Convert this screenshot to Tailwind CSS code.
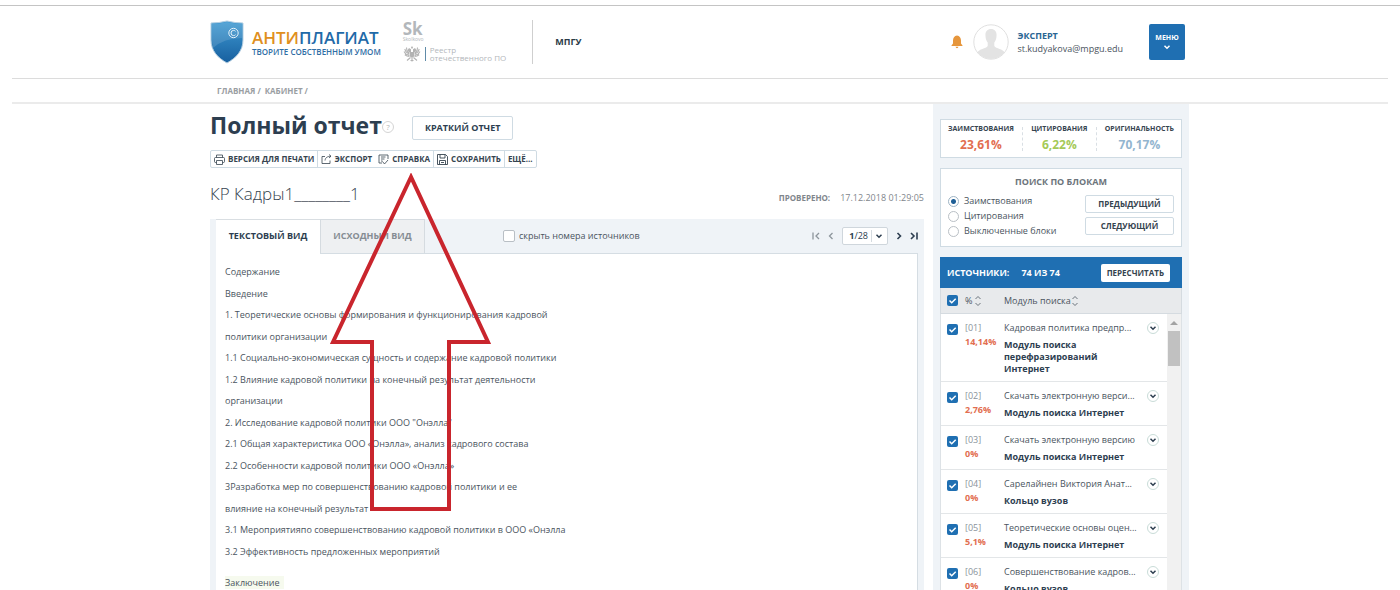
<!DOCTYPE html>
<html lang="ru">
<head>
<meta charset="utf-8">
<title>Антиплагиат — Полный отчет</title>
<script src="https://cdn.jsdelivr.net/npm/@tailwindcss/browser@4"></script>
</head>
<body class="flex h-screen flex-col overflow-hidden bg-white pt-[5px] font-['Open_Sans','Noto_Sans',sans-serif] text-[9px] leading-3 text-[#4a545e]">
<svg class="hidden" aria-hidden="true">
  <symbol id="chev" viewBox="0 0 8 8"><path d="M1.5 2.8 4 5.2 6.500 2.800" fill="none" stroke="currentColor" stroke-width="1.5"/></symbol>
  <symbol id="sort" viewBox="0 0 8 12"><path d="M1.500 4 4 1.500 6.500 4M1.500 8 4 10.500 6.500 8" fill="none" stroke="currentColor" stroke-width=".8"/></symbol>
</svg>

<header class="border-t border-[#c4c4c4]">
  <div class="mx-3 border-b border-[#dcdcdc]">
    <div class="mx-auto flex h-[72px] max-w-[980px] items-center">
      <a href="#" class="flex items-center gap-2">
        <svg class="h-11 w-[34px]" viewBox="0 0 34 44" aria-hidden="true">
          <defs><linearGradient id="sh" x1="0" y1="0" x2="0" y2="1"><stop offset="0" stop-color="#3f9ad2"/><stop offset="1" stop-color="#175f9f"/></linearGradient></defs>
          <path d="M1 3Q9 3 17 1Q25 3 33 3V20C33 31 26 38 17 43C8 38 1 31 1 20Z" fill="url(#sh)" stroke="#b5cfe2"/>
          <path d="M2 4Q10 4 17 2Q25 4 32 4V18Q14 18 3 28Q2 24 2 20Z" fill="#fff" opacity=".13"/>
          <circle cx="23.500" cy="13" r="4.700" fill="none" stroke="#e4f2fb"/>
          <path d="M25.500 11.300Q24.800 10.400 23.600 10.400A2.600 2.600 0 0 0 23.600 15.600Q24.800 15.600 25.500 14.700" fill="none" stroke="#e4f2fb"/>
        </svg>
        <span class="block">
          <span class="block text-[17px] leading-5 font-semibold text-[#1f6aa8]"><span class="text-[#e08f1d]">АНТИ</span>ПЛАГИАТ</span>
          <span class="block text-[8px] leading-2 font-semibold text-[#2f6ea5]">ТВОРИТЕ СОБСТВЕННЫМ УМОМ</span>
        </span>
      </a>
      <div class="ml-[22px] flex flex-col gap-1 text-[#b3b7bb]">
        <div class="flex flex-col">
          <span class="text-[17px] leading-[14px] font-bold">Sk</span>
          <span class="text-[5px] leading-[6px]">Skolkovo</span>
        </div>
        <div class="flex items-center gap-1">
          <svg class="h-4 w-[18px]" viewBox="0 0 18 16" fill="#b3b3b3" aria-hidden="true">
            <path d="M9 0 10 1.500 9.700 2.500H8.300L8 1.500ZM6 2 8 3.300V6H6L5 4.800H4L5 3.500ZM12 2 10 3.300V6H12L13 4.800H14L13 3.500ZM7 6H11V10.500L9 12 7 10.500Z"/>
            <path d="M3.500 1.500 4 5 6.500 7M1.800 3 3 6 6.500 8.200M1 5.500 2.800 8 6.500 9.400M1.800 8.800 4 10 6.500 10.400M14.500 1.500 14 5 11.500 7M16.200 3 15 6 11.500 8.200M17 5.500 15.200 8 11.500 9.400M16.200 8.800 14 10 11.500 10.400M7.500 11.500 4 14.500M10.500 11.500 14 14.500M9 12V15.500M7.500 14.500H10.500" fill="none" stroke="#b3b3b3" stroke-width="1.100"/>
          </svg>
          <span class="h-[14px] w-px bg-[#5f8ba8]"></span>
          <span class="text-[8px] leading-2">Реестр<br>отечественного ПО</span>
        </div>
      </div>
      <div class="ml-[26px] h-11 w-px bg-[#cfcfcf]"></div>
      <span class="ml-[22px] font-bold text-[#2c3b48]">МПГУ</span>
      <div class="mr-[5px] ml-auto flex items-center">
        <svg class="h-[14px] w-3" viewBox="0 0 12 14" fill="#e6963c" role="img" aria-label="Уведомления"><path d="M6 .5C8.700 .8 10 3 10 5.500V8.500L11.500 10.500V11H.5V10.500L2 8.500V5.500C2 3 3.300 .8 6 .5ZM4.500 11.800H7.500Q7 13.200 6 13.200T4.500 11.800Z"/></svg>
        <svg class="ml-2.5 size-9" viewBox="0 0 36 36" aria-hidden="true">
          <defs><clipPath id="av"><circle cx="18" cy="18" r="17"/></clipPath></defs>
          <circle cx="18" cy="18" r="17.200" fill="#fff" stroke="#e0e0e0"/>
          <path clip-path="url(#av)" d="M18 5C22 5 24 8 23.500 12C23.500 15 22.500 17 21.300 18.500V22C23 25 30 24.500 32 29V36H4V29C6 24.500 13 25 14.700 22V18.500C13.500 17 12.500 15 12.500 12C12 8 14 5 18 5Z" fill="#e3e3e3"/>
        </svg>
        <div class="ml-2 leading-[13px]">
          <a href="#" class="block font-bold text-[#2a6592]">ЭКСПЕРТ</a>
          <span class="block">st.kudyakova@mpgu.edu</span>
        </div>
        <button class="ml-[26px] flex size-9 flex-col items-center justify-center rounded-xs bg-[#1f6fb2] text-[7px] leading-[10px] font-bold text-white">МЕНЮ<svg class="size-2" aria-hidden="true"><use href="#chev"/></svg></button>
      </div>
    </div>
  </div>
  <div class="mx-3 border-b-2 border-[#ebebeb]">
    <nav class="mx-auto flex h-[23px] max-w-[980px] items-center gap-1 pl-[7px] text-[8px] font-bold text-[#9a9ea2]" aria-label="Путь"><a href="#">ГЛАВНАЯ /</a><a href="#">КАБИНЕТ /</a></nav>
  </div>
</header>

<div class="mx-auto flex min-h-0 w-full max-w-[980px] flex-1 justify-between gap-[9px] pr-px">
  <main class="relative flex min-w-0 flex-1 flex-col">
    <div class="mt-2 flex h-8 items-start">
      <h1 class="text-[23px] leading-[27px] font-bold text-[#2d3e50]">Полный отчет</h1>
      <button class="mt-[9px] size-3 rounded-full border border-[#d4d4d4] text-[8px] leading-none text-[#b5b5b5]" aria-label="Помощь">?</button>
      <button class="mt-1 ml-[18px] h-6 rounded-xs border border-[#cfdbe3] px-3 font-bold text-[#2d3e50]">КРАТКИЙ ОТЧЕТ</button>
    </div>
    <div class="mt-[6px] flex h-[18px] items-stretch self-start rounded-xs border border-[#cfdbe3] text-[8px] font-bold text-[#36444f]" role="toolbar">
      <button class="flex items-center gap-[2px] border-r border-[#cfdbe3] px-[3px]"><svg class="mr-px size-[11px]" viewBox="0 0 11 11" fill="none" stroke="currentColor" stroke-width=".8" aria-hidden="true"><path d="M2.500 3.500V1H8.500V3.500M2.500 8.500H1.500Q.5 8.500 .5 7.500V4.500Q.5 3.500 1.500 3.500H9.500Q10.500 3.500 10.500 4.500V7.500Q10.500 8.500 9.500 8.500H8.500M2.500 6.500H8.500V10.500H2.500Z"/></svg>ВЕРСИЯ ДЛЯ ПЕЧАТИ</button>
      <button class="flex items-center gap-[2px] px-[3px]"><svg class="size-[11px]" viewBox="0 0 11 11" fill="none" stroke="currentColor" stroke-width=".8" aria-hidden="true"><path d="M4 2.500H1V9.500H9V6.500M4 6.500C4.500 3.500 6 2.500 10 2.200M8 .5 10 2.200 8 4"/></svg>ЭКСПОРТ</button>
      <button class="flex items-center gap-[3px] px-[3px]"><svg class="size-[11px]" viewBox="0 0 11 11" fill="none" stroke="currentColor" stroke-width=".8" aria-hidden="true"><path d="M4 9H1V1H10V5M3 3H7.500M3 5H6.500M3 7H4.500M4.500 7.500 6.500 10 10 6"/></svg>СПРАВКА</button>
      <button class="flex items-center gap-[3px] border-l border-[#cfdbe3] px-[3px]"><svg class="size-[11px]" viewBox="0 0 11 11" fill="none" stroke="currentColor" stroke-width=".9" aria-hidden="true"><path d="M.5 .5H8.500L10.500 2.500V10.500H.5ZM3 .5V4H8V.5M2.500 10.500V6.500H8.500V10.500M4 8.500H7"/></svg>СОХРАНИТЬ</button>
      <button class="border-l border-[#cfdbe3] px-[3px]">ЕЩЁ...</button>
    </div>
    <div class="mt-3 flex h-[27px] items-center justify-between">
      <h2 class="text-[17px] leading-6 font-light text-[#36444f]">КР Кадры1________1</h2>
      <p class="mt-2 flex gap-2.5 text-[#7f868c]"><span class="text-[8px] font-bold">ПРОВЕРЕНО:</span><span>17.12.2018 01:29:05</span></p>
    </div>
    <section class="mt-3 flex min-h-0 flex-1 flex-col bg-[#eff3f7] px-[6px]">
      <div class="flex h-[34px] shrink-0 items-center">
        <div class="flex self-stretch font-bold" role="tablist">
          <button role="tab" aria-selected="true" class="z-1 -mb-px w-[104px] border-t border-[#d9dee2] bg-white pb-[3px] text-[#2d3e50]">ТЕКСТОВЫЙ ВИД</button>
          <button role="tab" aria-selected="false" class="w-[105px] border border-b-0 border-[#d5dbe0] bg-[#eef0f2] pb-[2px] text-[#858c93]">ИСХОДНЫЙ ВИД</button>
        </div>
        <label class="ml-[78px] flex items-center gap-1"><input type="checkbox" class="size-3 appearance-none rounded-xs border border-[#b9bfc5] bg-white">скрыть номера источников</label>
        <div class="ml-auto flex items-center gap-[7px] text-[#2d3e50]">
          <button class="text-[#8d959c]" aria-label="Первая страница"><svg class="size-2" viewBox="0 0 8 8" fill="none" stroke="currentColor" stroke-width="1.300" aria-hidden="true"><path d="M1 .5V7.500M7 1 4 4 7 7"/></svg></button>
          <button class="text-[#8d959c]" aria-label="Предыдущая страница"><svg class="size-2" viewBox="0 0 8 8" fill="none" stroke="currentColor" stroke-width="1.300" aria-hidden="true"><path d="M5.500 1 2.500 4 5.500 7"/></svg></button>
          <button class="flex h-[18px] items-center rounded-xs border border-[#cfd6dc] bg-white pr-1 pl-1.5" aria-label="Выбор страницы"><span><b>1</b>/28</span><span class="mx-[3px] h-3 w-px bg-[#d5dbe0]"></span><svg class="size-2" aria-hidden="true"><use href="#chev"/></svg></button>
          <button aria-label="Следующая страница"><svg class="size-2" viewBox="0 0 8 8" fill="none" stroke="currentColor" stroke-width="1.600" aria-hidden="true"><path d="M2.500 1 5.500 4 2.500 7"/></svg></button>
          <button aria-label="Последняя страница"><svg class="size-2" viewBox="0 0 8 8" fill="none" stroke="currentColor" stroke-width="1.600" aria-hidden="true"><path d="M1 1 4 4 1 7M7 .5V7.500"/></svg></button>
        </div>
      </div>
      <article class="flex-1 border border-b-0 border-l-0 border-[#d5dde3] bg-white px-[9px] pt-[7px] text-[9px] leading-[21px]">
        <div class="flex h-[301px] flex-col justify-between">
          <p>Содержание</p>
          <p>Введение</p>
          <p>1. Теоретические основы формирования и функционирования кадровой</p>
          <p>политики организации</p>
          <p>1.1 Социально-экономическая сущность и содержание кадровой политики</p>
          <p>1.2 Влияние кадровой политики на конечный результат деятельности</p>
          <p>организации</p>
          <p>2. Исследование кадровой политики ООО "Онэлла"</p>
          <p>2.1 Общая характеристика ООО «Онэлла», анализ кадрового состава</p>
          <p>2.2 Особенности кадровой политики ООО «Онэлла»</p>
          <p>3Разработка мер по совершенствованию кадровой политики и ее</p>
          <p>влияние на конечный результат</p>
          <p>3.1 Мероприятияпо совершенствованию кадровой политики в ООО «Онэлла</p>
          <p>3.2 Эффективность предложенных мероприятий</p>
        </div>
        <p class="mt-[10px]"><mark class="bg-[#f6faee] pr-1 text-inherit">Заключение</mark></p>
      </article>
    </section>
    <svg class="pointer-events-none absolute top-[69px] left-[120px] h-[342px] w-[161px]" viewBox="0 0 161 342" fill="none" stroke="#c9252d" stroke-width="4" aria-hidden="true"><path d="M81 4 3 169H42V336H119V169H158Z"/></svg>
  </main>

  <aside class="flex w-64 shrink-0 flex-col bg-[#eff3f7] px-[7px] pt-[15px]">
    <dl class="flex h-[39px] shrink-0 items-center justify-between border border-[#cfdbe3] bg-white px-[7px] text-center">
      <div><dt class="text-[7px] leading-[10px] font-bold text-[#36444f]">ЗАИМСТВОВАНИЯ</dt><dd class="mt-[3px] text-xs font-bold text-[#e26e50]">23,61%</dd></div>
      <div class="h-6 border-l border-dashed border-[#d9dfe4]"></div>
      <div><dt class="text-[7px] leading-[10px] font-bold text-[#36444f]">ЦИТИРОВАНИЯ</dt><dd class="mt-[3px] text-xs font-bold text-[#a5c957]">6,22%</dd></div>
      <div class="h-6 border-l border-dashed border-[#d9dfe4]"></div>
      <div><dt class="text-[7px] leading-[10px] font-bold text-[#36444f]">ОРИГИНАЛЬНОСТЬ</dt><dd class="mt-[3px] text-xs font-bold text-[#93b5cf]">70,17%</dd></div>
    </dl>
    <fieldset class="mt-[10px] h-[79px] shrink-0 border border-[#cfdbe3] bg-white px-[7px] pt-[7px]">
      <h3 class="text-center font-bold text-[#6c747b]">ПОИСК ПО БЛОКАМ</h3>
      <div class="mt-[7px] flex justify-between">
        <div class="flex flex-col gap-[3px]">
          <label class="flex items-center gap-[5px]"><input type="radio" name="block" checked class="size-[11px] appearance-none rounded-full border border-[#9db3c4] checked:bg-[radial-gradient(circle,#1f5f96_2px,#fff_3px)]">Заимствования</label>
          <label class="flex items-center gap-[5px]"><input type="radio" name="block" class="size-[11px] appearance-none rounded-full border border-[#b9bfc5]">Цитирования</label>
          <label class="flex items-center gap-[5px]"><input type="radio" name="block" class="size-[11px] appearance-none rounded-full border border-[#b9bfc5]">Выключенные блоки</label>
        </div>
        <div class="flex w-[89px] flex-col gap-1 text-[8px] font-bold text-[#36444f]">
          <button class="h-[18px] rounded-xs border border-[#cfdbe3]">ПРЕДЫДУЩИЙ</button>
          <button class="h-[18px] rounded-xs border border-[#cfdbe3]">СЛЕДУЮЩИЙ</button>
        </div>
      </div>
    </fieldset>
    <div class="mt-[10px] flex h-[31px] shrink-0 items-center bg-[#1f6fb2] pr-3 pl-[7px] font-bold text-white">
      <span>ИСТОЧНИКИ:</span><span class="ml-3">74 ИЗ 74</span>
      <button class="ml-auto h-[18px] rounded-xs bg-white px-[6px] text-[8px] text-[#36444f]">ПЕРЕСЧИТАТЬ</button>
    </div>
    <div class="flex h-[26px] shrink-0 items-center border border-t-0 border-[#d5dbe0] bg-[#e8eaec] pl-[6px]">
      <label class="relative flex"><input type="checkbox" checked aria-label="Выбрать все" class="size-[11px] appearance-none rounded-xs bg-[#1f6fb2]"><svg class="pointer-events-none absolute inset-0 size-[11px]" viewBox="0 0 11 11" aria-hidden="true"><path d="M2.500 5.500 4.700 7.700 8.700 3.700" fill="none" stroke="#fff" stroke-width="1.500"/></svg></label>
      <button class="ml-[7px] flex w-[39px] items-center gap-0.5">%<svg class="h-3 w-2" aria-hidden="true"><use href="#sort"/></svg></button>
      <button class="flex items-center">Модуль поиска<svg class="h-3 w-2" aria-hidden="true"><use href="#sort"/></svg></button>
    </div>
    <div class="flex min-h-0 flex-1 overflow-hidden border-x border-[#dde2e6] bg-white">
      <ul id="sources" class="min-w-0 flex-1"></ul>
      <div class="w-[14px] bg-[#f1f1f1] pt-[7px]" aria-hidden="true">
        <svg class="mx-auto h-1 w-2" viewBox="0 0 8 4"><path d="M0 4 4 0 8 4Z" fill="#a3a3a3"/></svg>
        <div class="mx-auto mt-[6px] h-[35px] w-3 bg-[#c1c1c1]"></div>
      </div>
    </div>
  </aside>
</div>

<template id="source-row">
  <li class="flex items-start border-b border-[#e3e6e8] pt-2 pb-[6px] pl-[6px]">
    <label class="relative mt-[2px] flex"><input type="checkbox" checked class="size-[11px] appearance-none rounded-xs bg-[#1f6fb2]"><svg class="pointer-events-none absolute inset-0 size-[11px]" viewBox="0 0 11 11" aria-hidden="true"><path d="M2.500 5.500 4.700 7.700 8.700 3.700" fill="none" stroke="#fff" stroke-width="1.500"/></svg></label>
    <div class="ml-[7px] w-[39px] shrink-0"><span data-n class="block text-[#8a939b]"></span><b data-p class="mt-[2px] block font-bold text-[#e26e50]"></b></div>
    <div class="w-[139px] shrink-0"><span data-t class="block whitespace-nowrap"></span><b data-m class="mt-[5px] block w-[126px] font-bold text-[#2d3e50]"></b></div>
    <button class="ml-1 flex size-3 items-center justify-center rounded-full border border-[#c9dcd8] text-[#2d3e50]" aria-label="Подробнее"><svg class="size-2 shrink-0" aria-hidden="true"><use href="#chev"/></svg></button>
  </li>
</template>
<script>
  const rows = [
    ['[01]', '14,14%', 'Кадровая политика предпр...', 'Модуль поиска перефразирований Интернет'],
    ['[02]', '2,76%', 'Скачать электронную верси...', 'Модуль поиска Интернет'],
    ['[03]', '0%', 'Скачать электронную версию', 'Модуль поиска Интернет'],
    ['[04]', '0%', 'Сарелайнен Виктория Анат...', 'Кольцо вузов'],
    ['[05]', '5,1%', 'Теоретические основы оцен...', 'Модуль поиска Интернет'],
    ['[06]', '0%', 'Совершенствование кадров...', 'Кольцо вузов'],
  ];
  const list = document.getElementById('sources');
  for (const [n, p, t, m] of rows) {
    const li = document.getElementById('source-row').content.cloneNode(true);
    li.querySelector('[data-n]').textContent = n;
    li.querySelector('[data-p]').textContent = p;
    li.querySelector('[data-t]').textContent = t;
    li.querySelector('[data-m]').textContent = m;
    li.querySelector('input').setAttribute('aria-label', 'Источник ' + n);
    list.append(li);
  }
</script>
</body>
</html>
